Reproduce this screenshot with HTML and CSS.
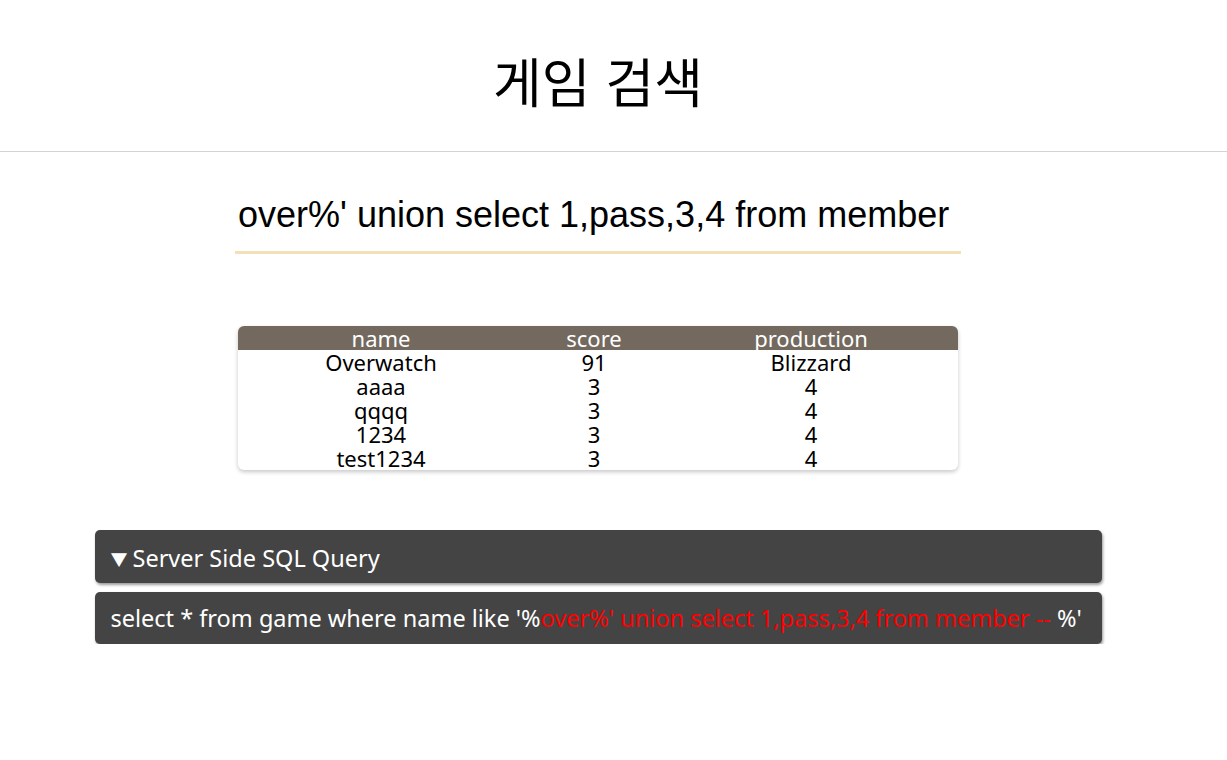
FILE: index.html
```html
<!DOCTYPE html>
<html lang="ko">
<head>
<meta charset="utf-8">
<title>게임 검색</title>
<link rel="stylesheet" href="styles.css">
</head>
<body>
<header class="header">
  <h1 class="title">게임 검색</h1>
</header>
<main class="page">
  <div class="search">
    <input class="search-input" type="text" value="over%' union select 1,pass,3,4 from member">
  </div>
  <div class="table-wrap">
    <table class="results">
      <thead>
        <tr><th>name</th><th>score</th><th>production</th></tr>
      </thead>
      <tbody>
        <tr><td>Overwatch</td><td>91</td><td>Blizzard</td></tr>
        <tr><td>aaaa</td><td>3</td><td>4</td></tr>
        <tr><td>qqqq</td><td>3</td><td>4</td></tr>
        <tr><td>1234</td><td>3</td><td>4</td></tr>
        <tr><td>test1234</td><td>3</td><td>4</td></tr>
      </tbody>
    </table>
  </div>
  <section class="query">
    <div class="query-box query-head"><span class="caret">▼</span>Server Side SQL Query</div>
    <div class="query-box query-body">select * from game where name like '%<span class="inject">over%' union select 1,pass,3,4 from member -- </span>%'</div>
  </section>
</main>
</body>
</html>
```

FILE: styles.css
```css
html, body {
  margin: 0;
  padding: 0;
  background: #fff;
}
body {
  font-family: "Noto Sans", "Noto Sans CJK KR", sans-serif;
  color: #000;
}
.header {
  height: 151px;
  border-bottom: 1px solid #d3d3d3;
}
.title {
  width: 1196px;
  margin: 0;
  padding-top: 49px;
  text-align: center;
  font-family: "Noto Sans CJK KR", sans-serif;
  font-weight: 400;
  font-size: 53px;
  line-height: 62px;
}
.page {
  width: 1196px;
  display: flex;
  flex-direction: column;
  align-items: center;
}
.search {
  margin-top: 38px;
  width: 726px;
}
.search-input {
  display: block;
  box-sizing: border-box;
  width: 726px;
  height: 64px;
  padding: 0 3px 11px;
  border: none;
  border-bottom: 3px solid #f3e0b8;
  outline: none;
  font-family: "Liberation Sans", Arial, sans-serif;
  font-size: 36px;
  color: #000;
  background: transparent;
}
.table-wrap {
  margin-top: 72px;
  width: 720px;
  border-radius: 6px;
  overflow: hidden;
  box-shadow: 0 2px 4px rgba(0, 0, 0, 0.22);
}
.results {
  width: 100%;
  border-collapse: collapse;
  font-size: 22px;
  line-height: 24px;
}
.results th, .results td {
  padding: 0;
  height: 24px;
  text-align: center;
  font-weight: 400;
  vertical-align: bottom;
}
.results th {
  background: #74695e;
  color: #fff;
}
.results th:nth-child(1) { width: 286px; }
.results th:nth-child(2) { width: 140px; }
.query {
  margin-top: 60px;
  width: 1007px;
  display: flex;
  flex-direction: column;
  gap: 9px;
}
.query-box {
  background: #444;
  color: #fff;
  border-radius: 5px;
  box-shadow: 1px 2px 3px rgba(0, 0, 0, 0.4);
  padding: 0 16px;
  font-size: 23.5px;
  white-space: pre;
}
.query-head {
  box-sizing: border-box;
  height: 53px;
  padding-top: 3px;
  display: flex;
  align-items: center;
}
.caret {
  font-size: 17px;
  width: 22px;
  display: inline-block;
}
.query-body {
  height: 52px;
  line-height: 52px;
}
.inject { color: #ff0000; }
```
